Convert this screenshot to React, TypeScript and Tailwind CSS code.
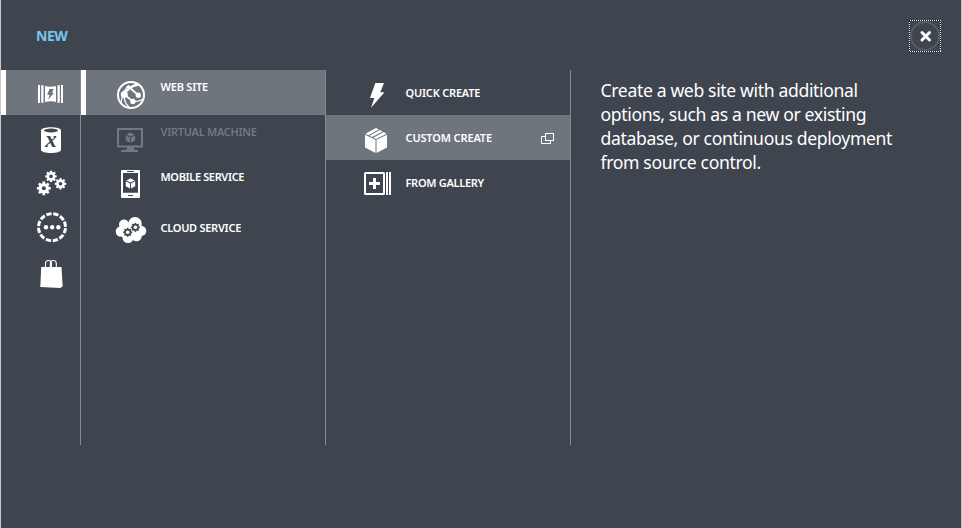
import type { ReactNode } from "react";

const BG = "#3e454f";

function Icon({ box, className, children }: { box: string; className: string; children: ReactNode }) {
  return (
    <svg viewBox={box} className={`shrink-0 ${className}`} fill="currentColor" aria-hidden="true">
      {children}
    </svg>
  );
}

function Gear({ cx, cy, r, hole, teeth = 8, fill = "currentColor", holeFill = BG }: {
  cx: number; cy: number; r: number; hole: number; teeth?: number; fill?: string; holeFill?: string;
}) {
  return (
    <g transform={`translate(${cx} ${cy})`}>
      <circle r={r * 0.76} fill={fill} />
      {Array.from({ length: teeth }, (_, i) => (
        <rect key={i} x={-r * 0.19} y={-r} width={r * 0.38} height={r * 0.5} fill={fill} transform={`rotate(${(i * 360) / teeth})`} />
      ))}
      <circle r={hole} fill={holeFill} />
    </g>
  );
}

function MiniCube({ cx, cy }: { cx: number; cy: number }) {
  return (
    <g transform={`translate(${cx} ${cy})`}>
      <path d="M0-5.3 4.2-3.2 0-1 -4.2-3.2Z M-4.7-2.4-.5-.2V5L-4.7 2.7Z M4.7-2.4.5-.2V5L4.7 2.7Z" />
    </g>
  );
}

const categories = [
  {
    name: "Compute",
    icon: (
      <Icon box="30 70 40 45" className="h-[45px] w-10">
        <path d="M38 85h2v18h-2z M41.200 85.300h2.300v17.400h-2.300z M61 85h2v18h-2z M57.500 85.300h2.300v17.400h-2.300z M45 86q5.500 1.400 11 0v16q-5.500-1.400-11 0z" />
        <path fill="#6e757c" d="M49.500 89h4.200l-1.700 3.900h2l-6 6.900 1.700-5h-2.500z" />
      </Icon>
    ),
  },
  {
    name: "Data services",
    icon: (
      <Icon box="30 115 40 45" className="h-[45px] w-10">
        <path d="M41 130.300c0-4.200 20-4.200 20 0v19.400c0 4.400-20 4.400-20 0z" />
        <ellipse cx="51" cy="130.500" rx="7" ry="1.900" fill={BG} />
        <text x="51" y="147" textAnchor="middle" fill={BG} className="font-['Liberation_Serif',serif] text-[23px] font-bold italic">x</text>
      </Icon>
    ),
  },
  {
    name: "App services",
    icon: (
      <Icon box="30 160 40 45" className="h-[45px] w-10">
        <Gear cx={43.800} cy={188.300} r={6.900} hole={2} />
        <Gear cx={51} cy={176.400} r={5.700} hole={1.800} />
        <Gear cx={60.500} cy={183.800} r={5.700} hole={1.800} />
      </Icon>
    ),
  },
  {
    name: "Network services",
    icon: (
      <Icon box="30 205 40 45" className="h-[45px] w-10">
        <circle cx="52" cy="227.200" r="13.500" fill="none" stroke="currentColor" strokeWidth="3" strokeDasharray="5.300 1.769" strokeDashoffset="-0.900" />
        <circle cx="46" cy="227.300" r="2.200" />
        <circle cx="52.200" cy="227.300" r="2.200" />
        <circle cx="58.400" cy="227.300" r="2.200" />
      </Icon>
    ),
  },
  {
    name: "Store",
    icon: (
      <Icon box="30 250 40 45" className="h-[45px] w-10">
        <path d="M41.200 267h20.300l1.200 19.200-2.400 1.700-20-.8z" />
        <path d="M45.500 268v-4.500q0-3 3-3t3 3v4.500 M50.300 268v-4.500q0-3 3-3t3 3v4.500" fill="none" stroke="currentColor" strokeWidth="1.100" />
      </Icon>
    ),
  },
];

const services = [
  {
    label: "WEB SITE",
    row: "h-[45px] bg-[#6e757c] text-white",
    track: "tracking-[-0.22px]",
    icon: (
      <Icon box="111 70 40 45" className="h-[45px] w-10">
        <circle cx="131" cy="95" r="13" fill="none" stroke="currentColor" strokeWidth="2" />
        <g fill="none" stroke="currentColor">
          <path d="M129 85.500Q123 89 121 103" strokeWidth="1.300" />
          <path d="M124 94.500Q129 86 138.500 84.500" strokeWidth="2.300" />
          <path d="M129 87 138 95M124.500 94.500 132.700 101.300" strokeWidth="1.700" />
          <path d="M124 94.500Q124 103 129 107M132.700 101.300Q140 102 142 99" strokeWidth="1.300" />
        </g>
        <circle cx="124.300" cy="94.500" r="3.500" />
        <circle cx="138.300" cy="95.200" r="2.600" />
        <circle cx="132.900" cy="101.400" r="2.600" />
        <circle cx="128.500" cy="87" r="1.800" />
      </Icon>
    ),
  },
  {
    label: "VIRTUAL MACHINE",
    row: "h-[45px] text-[#727981]",
    track: "tracking-[-0.28px]",
    icon: (
      <Icon box="111 115 40 45" className="h-[45px] w-10">
        <path fillRule="evenodd" d="M117 128h26v19.500h-26z M119 130v15.500h22V130z" />
        <path d="M127 147h7v2.500l4 .8v1.700h-17v-1.700l6-.8z" />
        <MiniCube cx={130.400} cy={137.800} />
      </Icon>
    ),
  },
  {
    label: "MOBILE SERVICE",
    row: "h-[51px] text-white",
    track: "tracking-[-0.36px]",
    icon: (
      <Icon box="111 160 40 45" className="h-[45px] w-10">
        <rect x="121" y="170" width="19" height="28" rx="1" />
        <path fill={BG} d="M123 173h15v19.700h-15z M127 171h7v1h-7z M128 195h5v1h-5z" />
        <MiniCube cx={130.500} cy={183.600} />
      </Icon>
    ),
  },
  {
    label: "CLOUD SERVICE",
    row: "h-[45px] text-white",
    track: "tracking-[-0.27px]",
    icon: (
      <Icon box="111 211 40 45" className="h-[45px] w-10">
        <circle cx="121" cy="231.500" r="5.300" />
        <circle cx="124" cy="224.500" r="5" />
        <circle cx="135" cy="223.800" r="6.800" />
        <circle cx="141.300" cy="231" r="5" />
        <circle cx="136.500" cy="236" r="5.300" />
        <circle cx="128" cy="237.500" r="5.500" />
        <path d="M122 225h18v12h-18z" />
        <Gear cx={127.700} cy={232.300} r={4.500} hole={1.800} fill={BG} holeFill="white" />
        <Gear cx={135.400} cy={227.300} r={4.500} hole={1.800} fill={BG} holeFill="white" />
      </Icon>
    ),
  },
];

const actions = [
  {
    label: "QUICK CREATE",
    row: "",
    track: "tracking-[-0.2px]",
    popup: false,
    icon: (
      <Icon box="356 70 40 45" className="h-[45px] w-10">
        <path d="M375.300 83h8.700l-3.700 9.300h4.200L371 107.800l3.300-9.800H370z" />
      </Icon>
    ),
  },
  {
    label: "CUSTOM CREATE",
    row: "bg-[#6e757c]",
    track: "tracking-[-0.14px]",
    popup: true,
    icon: (
      <Icon box="356 115 40 45" className="h-[45px] w-10">
        <path d="M365 134.800l10.500 5V153L365 147.500z M387 134.800l-10.500 5V153L387 147.500z M376 128l2.800 1.500-10.500 5.700-2.900-1.500z M380 130.100l2.500 1.300-10.500 5.700-2.500-1.300z M383.700 132l2.900 1.700-10.600 5.200-2.700-1.200z" />
      </Icon>
    ),
  },
  {
    label: "FROM GALLERY",
    row: "",
    track: "tracking-[-0.3px]",
    popup: false,
    icon: (
      <Icon box="356 160 40 45" className="h-[45px] w-10">
        <rect x="365" y="173" width="19" height="21" fill="none" stroke="currentColor" strokeWidth="2" rx=".5" />
        <path d="M373 178h3v4h4v3h-4v4h-3v-4h-4v-3h4z M386 172h2v23h-2z M389 172h2v23h-2z" />
      </Icon>
    ),
  },
];

export default function App() {
  return (
    <div className="flex h-[528px] w-[962px] flex-col overflow-hidden border-x border-[#c8c8c8] bg-[#3e454f] font-['Noto_Sans',sans-serif] text-white">
      <header className="flex h-[70px] items-start justify-between pt-5 pr-5 pl-[35px]">
        <h1 className="mt-[6px] text-[14px] leading-5 font-bold tracking-[-0.5px] text-[#76c5f0]">NEW</h1>
        <button aria-label="Close" className="h-8 w-8">
          <svg viewBox="0 0 32 32" className="block h-8 w-8" fill="none">
            <rect x=".5" y=".5" width="31" height="31" stroke="#111" />
            <rect x=".5" y=".5" width="31" height="31" stroke="white" strokeDasharray="1 1" shapeRendering="crispEdges" />
            <circle cx="16" cy="16" r="14" stroke="#565d67" strokeWidth="2" />
            <path d="M13 12.500l7.500 7.500M20.500 12.500l-7.500 7.500" stroke="white" strokeWidth="3" strokeLinecap="round" />
          </svg>
        </button>
      </header>

      <main className="flex h-[375px]">
        <nav className="w-20 shrink-0 border-r border-[#858a90]">
          {categories.map((c, i) => (
            <button
              key={c.name}
              aria-label={c.name}
              className={`flex h-[45px] w-full border-l-[5px] pl-6 ${i === 0 ? "border-white bg-[#6e757c]" : "border-transparent"}`}
            >
              {c.icon}
            </button>
          ))}
        </nav>

        <ul className="w-[245px] shrink-0 border-r border-[#858a90]">
          {services.map((s, i) => (
            <li key={s.label} className={`flex border-l-[5px] pl-[25px] ${s.row} ${i === 0 ? "border-white" : "border-transparent"}`}>
              {s.icon}
              <span className={`mt-[9px] ml-[9.5px] text-[11px] leading-4 font-semibold whitespace-nowrap ${s.track}`}>{s.label}</span>
            </li>
          ))}
        </ul>

        <ul className="w-[245px] shrink-0 border-r border-[#858a90]">
          {actions.map((a) => (
            <li key={a.label} className={`flex h-[45px] pl-[30px] ${a.row}`}>
              {a.icon}
              <span className={`mt-[15px] ml-[9.5px] text-[11px] leading-4 font-semibold whitespace-nowrap ${a.track}`}>{a.label}</span>
              {a.popup && (
                <svg viewBox="540 132 16 14" className="mt-[17px] mr-[14px] ml-auto h-[14px] w-4" fill="none" stroke="currentColor">
                  <path d="M545 136.500h-3.500v7h9V141" />
                  <rect x="545.500" y="133.500" width="8" height="7" />
                </svg>
              )}
            </li>
          ))}
        </ul>

        <p className="mt-2 ml-[29.5px] text-[17.600px] leading-6 tracking-[-0.360px] whitespace-nowrap">
          Create a web site with additional
          <br />
          options, such as a new or existing
          <br />
          database, or continuous deployment
          <br />
          from source control.
        </p>
      </main>
    </div>
  );
}
